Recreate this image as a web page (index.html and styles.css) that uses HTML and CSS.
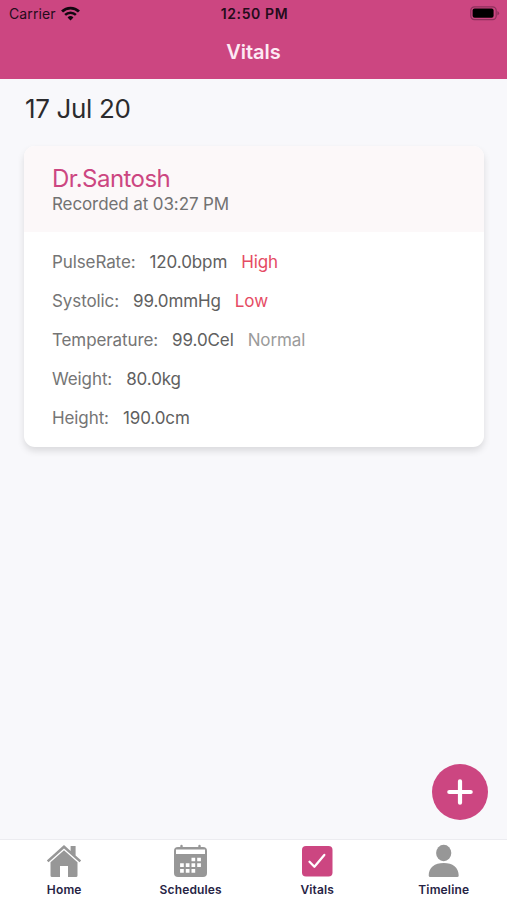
FILE: index.html
```html
<!DOCTYPE html>
<html lang="en">
<head>
    <meta charset="UTF-8">
    <meta name="viewport" content="width=device-width, initial-scale=1.0">
    <title>Vitals</title>
    <link rel="stylesheet" href="styles.css">
</head>
<body>
    <header>
        <div class="status-bar">
            <div class="carrier">
                <span>Carrier</span>
                <svg width="19" height="15" viewBox="0 0 18 14" fill="none" stroke="#120710">
                    <path d="M1 5.2a11.5 11.5 0 0 1 16 0" stroke-width="2.7"/>
                    <path d="M3.9 8.3a7.4 7.4 0 0 1 10.2 0" stroke-width="2.4"/>
                    <path d="M9 13.6 6.2 10.7a4.1 4.1 0 0 1 5.6 0z" fill="#120710" stroke="none"/>
                </svg>
            </div>
            <span class="time">12:50 PM</span>
            <svg class="battery" width="30" height="15" viewBox="0 0 30 15">
                <rect x=".8" y=".8" width="25.4" height="12.8" rx="3.6" fill="none" stroke="#8d305c" stroke-width="1.2"/>
                <rect x="2.6" y="2.6" width="21" height="9.2" rx="2" fill="#000"/>
                <path d="M27.4 5v4.5q1.7-.7 1.7-2.2T27.4 5z" fill="#8d305c"/>
            </svg>
        </div>
        <h1>Vitals</h1>
    </header>

    <main>
        <h2>17 Jul 20</h2>
        <div class="card">
            <div class="card-head">
                <div class="doctor">Dr.Santosh</div>
                <div class="recorded">Recorded at 03:27 PM</div>
            </div>
            <div class="card-body">
                <div class="row"><span>PulseRate:</span><span class="value">120.0bpm</span><span class="alert">High</span></div>
                <div class="row"><span>Systolic:</span><span class="value">99.0mmHg</span><span class="alert">Low</span></div>
                <div class="row"><span>Temperature:</span><span class="value">99.0Cel</span><span class="normal">Normal</span></div>
                <div class="row"><span>Weight:</span><span class="value">80.0kg</span></div>
                <div class="row"><span>Height:</span><span class="value">190.0cm</span></div>
            </div>
        </div>
        <button class="add" aria-label="Add">
            <svg width="26" height="26" viewBox="0 0 26 26" stroke="#fff" stroke-width="4.2" stroke-linecap="round">
                <path d="M13 2.3v21.4M2.3 13h21.4"/>
            </svg>
        </button>
    </main>

    <nav>
        <a class="tab">
            <svg width="36" height="34" viewBox="0 0 36 34" fill="#979797">
                <path d="M18 1 .8 16.4l1.7 1.9L18 4.6l15.5 13.7 1.7-1.9-5.6-5V2h-5v4.9z"/>
                <path d="M18 6.2 4.5 18.2V31.5q0 1.5 1.5 1.5h8V22h8v11h8q1.5 0 1.5-1.5V18.2z"/>
            </svg>
            <span>Home</span>
        </a>
        <a class="tab">
            <svg width="36" height="34" viewBox="0 0 36 34">
                <path d="M8.5 2v3M26.5 2v3" stroke="#979797" stroke-width="2.4" stroke-linecap="round"/>
                <rect x="1" y="3" width="33" height="30" rx="4" fill="#979797"/>
                <path d="M3 5.5h29V10H3z" fill="#fff"/>
                <g stroke="#fff" stroke-width="3.7" stroke-dasharray="3.7 2">
                    <path d="M18.5 15.5h9.4M7.1 21.2h20.8M7.1 26.9h15.1"/>
                </g>
            </svg>
            <span>Schedules</span>
        </a>
        <a class="tab">
            <svg width="36" height="34" viewBox="0 0 36 34">
                <rect x="3" y="2" width="30.5" height="30.5" rx="4" fill="#cc4681"/>
                <path d="M10.5 17.7l4.9 5L25.3 11" fill="none" stroke="#fff" stroke-width="2.3" stroke-linecap="round" stroke-linejoin="round"/>
            </svg>
            <span>Vitals</span>
        </a>
        <a class="tab">
            <svg width="36" height="34" viewBox="0 0 36 34" fill="#979797">
                <ellipse cx="17.7" cy="9" rx="7.6" ry="8.3"/>
                <path d="M2.7 31.5c0-8 6-12.500 15-12.500s15 4.500 15 12.500q0 1.500-1.500 1.500h-27q-1.500 0-1.500-1.500z"/>
            </svg>
            <span>Timeline</span>
        </a>
    </nav>
</body>
</html>
```

FILE: styles.css
```css
* {
    box-sizing: border-box;
}
body {
    margin: 0;
    height: 100vh;
    display: flex;
    flex-direction: column;
    font-family: 'Inter', sans-serif;
    background-color: #f8f8fb;
    overflow: hidden;
}
header {
    height: 79px;
    background-color: #cc4681;
}
.status-bar {
    height: 27px;
    padding: 0 7px 0 9px;
    display: grid;
    grid-template-columns: 1fr auto 1fr;
    align-items: center;
    color: #240c1b;
    font-size: 14px;
}
.carrier {
    display: flex;
    align-items: center;
    gap: 5px;
    letter-spacing: 0.1px;
}
.time {
    font-weight: 600;
    letter-spacing: 0.6px;
}
.battery {
    justify-self: end;
}
h1 {
    margin: 0;
    line-height: 51px;
    text-align: center;
    font-size: 20px;
    font-weight: 600;
    color: #fdeaf4;
}
main {
    flex: 1;
    padding: 14px 23px 0 24px;
    position: relative;
}
h2 {
    margin: 0 0 22px 1px;
    line-height: 31px;
    font-size: 26px;
    font-weight: 400;
    letter-spacing: -0.35px;
    color: #2b2b2e;
}
.card {
    height: 301px;
    border-radius: 11px;
    background-color: #fff;
    box-shadow: 0 4px 7px rgba(0, 0, 0, 0.12);
    overflow: hidden;
}
.card-head {
    height: 86px;
    padding: 18px 28px 0;
    background-color: #fcf8f9;
}
.doctor {
    line-height: 30px;
    font-size: 24px;
    letter-spacing: -0.55px;
    color: #cc4681;
}
.recorded {
    line-height: 21px;
    font-size: 17px;
    letter-spacing: -0.1px;
    color: #727272;
}
.card-body {
    padding: 11px 28px;
    font-size: 17px;
    letter-spacing: -0.1px;
    color: #757575;
}
.row {
    display: flex;
    gap: 14px;
    line-height: 39px;
}
.value {
    color: #606060;
}
.alert {
    color: #e54b64;
}
.normal {
    color: #9b9b9b;
}
.add {
    position: absolute;
    right: 19px;
    bottom: 19px;
    width: 56px;
    height: 56px;
    padding: 0;
    display: flex;
    align-items: center;
    justify-content: center;
    border: none;
    border-radius: 50%;
    background-color: #cc4681;
}
nav {
    height: 61px;
    padding-left: 1px;
    display: grid;
    grid-template-columns: repeat(4, 1fr);
    border-top: 1px solid #ececf0;
    background-color: #fff;
}
.tab {
    padding-top: 4px;
    display: flex;
    flex-direction: column;
    align-items: center;
    gap: 4px;
    font-size: 12px;
    line-height: 15px;
    font-weight: 600;
    letter-spacing: 0.15px;
    color: #272445;
}
```
